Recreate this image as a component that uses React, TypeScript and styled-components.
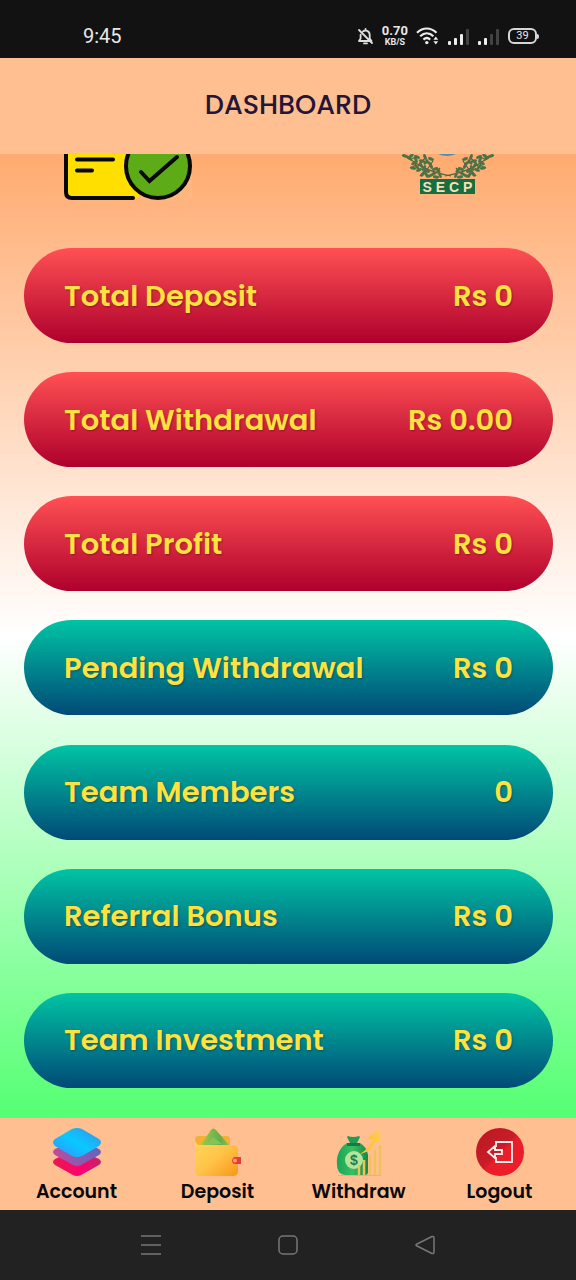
import React from 'react';
import styled, { createGlobalStyle } from 'styled-components';

const GlobalStyle = createGlobalStyle`
  * { box-sizing: border-box; }
  body {
    margin: 0;
    font-family: Poppins, Inter, "Open Sans", sans-serif;
    background: #222222;
  }
`;

const Screen = styled.div`
  display: flex;
  flex-direction: column;
  min-height: 100vh;
`;

const StatusBar = styled.div`
  display: flex;
  align-items: center;
  justify-content: space-between;
  height: 58px;
  padding: 14px 39px 0 83px;
  background: #121212;
  color: #e8e8e8;
`;

const Clock = styled.time`
  font-family: Roboto, sans-serif;
  font-size: 20px;
  line-height: 24px;
`;

const StatusIcons = styled.div`
  display: flex;
  align-items: center;
  gap: 8px;
`;

const Speed = styled.div`
  display: flex;
  flex-direction: column;
  align-items: center;
  font-family: Roboto, sans-serif;
  font-weight: 700;
`;

const SpeedValue = styled.span`
  font-size: 13px;
  line-height: 12px;
`;

const SpeedUnit = styled.span`
  font-size: 9px;
  line-height: 10px;
`;

const Battery = styled.div`
  display: grid;
  place-items: center;
  position: relative;
  width: 29px;
  height: 16px;
  border: 2px solid #d6d6d6;
  border-radius: 6px;
  font-family: Roboto, sans-serif;
  font-size: 11px;
  line-height: 12px;

  &::after {
    content: "";
    position: absolute;
    right: -4px;
    top: 4px;
    width: 2px;
    height: 5px;
    border-radius: 0 2px 2px 0;
    background: #d6d6d6;
  }
`;

const Header = styled.header`
  display: grid;
  place-items: center;
  height: 96px;
  padding-bottom: 2px;
  background: #ffbf91;
`;

const Title = styled.h1`
  margin: 0;
  font-size: 27px;
  line-height: 36px;
  font-weight: 500;
  color: #231638;
`;

const Main = styled.main`
  flex: 1;
  display: flex;
  flex-direction: column;
  background: linear-gradient(#ffab70, #ffffff 50%, #55ff73);
`;

const Badges = styled.div`
  display: flex;
  align-items: flex-end;
  justify-content: space-between;
  height: 46px;
  padding: 0 82px 0 64px;
`;

const Totals = styled.dl`
  flex: 1;
  display: flex;
  flex-direction: column;
  justify-content: space-between;
  gap: 29px;
  margin: 0;
  padding: 48px 23px 30px 24px;
`;

const Card = styled.div<{ $team?: boolean }>`
  display: flex;
  align-items: center;
  justify-content: space-between;
  height: 95px;
  padding: 0 40px;
  border-radius: 48px;
  background: ${(p) => (p.$team ? 'linear-gradient(#00c4a4, #004a77)' : 'linear-gradient(#ff5153, #ae002c)')};
  color: #ffe13f;
  font-size: 29px;
  line-height: 40px;
  font-weight: 600;
  text-shadow: 1px 1px 2px rgba(0, 0, 0, 0.3);
`;

const Label = styled.dt``;

const Amount = styled.dd`
  margin: 0;
`;

const TabBar = styled.nav`
  display: grid;
  grid-template-columns: repeat(4, 1fr);
  height: 92px;
  padding: 8px 6px 0;
  background: #ffbf91;
`;

const Tab = styled.a`
  display: flex;
  flex-direction: column;
  align-items: center;
  gap: 2px;
  color: #080808;
  font-size: 19px;
  line-height: 24px;
  font-weight: 600;
  text-decoration: none;
`;

const SystemBar = styled.div`
  display: flex;
  align-items: center;
  justify-content: center;
  gap: 109px;
  height: 70px;
  background: #222222;
`;

const SystemButton = styled.button`
  display: grid;
  width: 28px;
  height: 28px;
  padding: 0;
  place-items: center;
  border: 0;
  background: none;
  color: #777777;
`;

const BellOff = () => (
  <svg width="17" height="19" viewBox="0 0 17 19" fill="none" stroke="#dedede" strokeWidth="1.8" strokeLinecap="round" strokeLinejoin="round" aria-hidden="true">
    <path d="M6 4.400C8 2.700 12.700 3.500 12.700 8v3.500l1.800 2.500H2l1.600-2.500V7.600M8.600 3V2M7 16.400h3M2 3l13 13" />
  </svg>
);

const Wifi = () => (
  <svg width="24" height="18" viewBox="0 0 24 18" fill="none" stroke="#ececec" strokeWidth="2.2" aria-hidden="true">
    <path d="M1 5.7c6-5.6 13.600-5.600 19.500 0M4.200 9.200c4-3.800 9.200-3.800 13.200 0M7.400 12.600c2.200-2 4.700-2 6.800 0" />
    <circle cx="10.800" cy="15.600" r="1.700" fill="#ececec" stroke="none" />
    <path d="M17.400 12.700l2.400-3.200 2.400 3.200zM17.400 14.300l2.400 3.200 2.400-3.200z" fill="#ececec" stroke="none" />
  </svg>
);

const Signal = ({ level }: { level: number }) => (
  <svg width="22" height="17" viewBox="0 0 22 17" aria-hidden="true">
    {[4, 7, 11, 16].map((h, i) => (
      <rect key={h} x={i * 6} y={17 - h} width="3" height={h} rx="1" fill={i < level ? '#ededed' : '#434343'} />
    ))}
  </svg>
);

const VerifiedCard = () => (
  <svg width="128" height="46" viewBox="0 0 128 46" role="img" aria-label="Verified document">
    <path d="M2 -10V38q0 6 6 6H75V-10z" fill="#ffdf00" />
    <path d="M2 -10V38q0 6 6 6H69" fill="none" stroke="#080808" strokeWidth="4" strokeLinecap="round" />
    <path d="M13 5.500h36M13 16.500h15" stroke="#080808" strokeWidth="4" strokeLinecap="round" />
    <path d="M75 42q12 9 26 7h30V-10h-28z" fill="#ffb77f" />
    <circle cx="94" cy="12" r="32" fill="#5dab16" stroke="#080808" strokeWidth="4" />
    <path d="M77 18l8.500 9L113 3" fill="none" stroke="#080808" strokeWidth="4" strokeLinecap="round" />
  </svg>
);

const leaves = [
  [7, 4, 35], [12, 9, -35], [15, 3, 20], [19, 11, 60], [17, 16, -20], [24, 8, -50], [25, 17, 20],
  [29, 12, 65], [31, 20, -35], [36, 16, 50], [3, 2, 20], [11, 14, 15], [23, 3, 70], [34, 23, 10],
  [21, 20, -50], [29, 5, 20], [27, 22, -15], [38, 21, 70], [9, 2, -40], [14, 6, 70], [20, 7, 15],
  [22, 14, -60], [27, 9, 30], [33, 15, -20], [15, 13, 50], [24, 20, 60],
];

const Branch = () => (
  <g>
    <path d="M2 1C14 10 26 18 49 22M8 6l7-4M16 12l8-9M14 10l-5 5M24 17l7-10M23 16l-5 6M33 20l5-6" fill="none" stroke="#52683b" strokeWidth="1.200" />
    {leaves.map(([x, y, r]) => (
      <ellipse key={`${x}-${y}`} cx={x} cy={y} rx="3.200" ry="1.500" transform={`rotate(${r} ${x} ${y})`} fill="#4d7247" />
    ))}
  </g>
);

const SecpText = styled.text`
  font-family: "Liberation Sans", sans-serif;
  font-size: 14px;
  font-weight: 700;
`;

const Secp = () => (
  <svg width="92" height="46" viewBox="0 0 92 46" role="img" aria-label="SECP">
    <path d="M36 0h18q-9 4-18 0z" fill="#4e8eae" />
    <Branch />
    <g transform="translate(92 0) scale(-1 1)"><Branch /></g>
    <rect x="18" y="25" width="55" height="15" fill="#14713f" />
    <SecpText x="45.500" y="37.500" textAnchor="middle" fill="#ffddb8">S E C P</SecpText>
  </svg>
);

const AccountIcon = () => (
  <svg width="52" height="52" viewBox="0 0 52 52" aria-hidden="true">
    <defs>
      <linearGradient id="sheetBlue" x1="0" y1="1" x2="1" y2="0"><stop stopColor="#368fff" /><stop offset=".5" stopColor="#08c9ff" /><stop offset="1" stopColor="#3b8fea" /></linearGradient>
      <linearGradient id="sheetPurple"><stop stopColor="#c04b9a" /><stop offset="1" stopColor="#6465bd" /></linearGradient>
      <linearGradient id="sheetRed"><stop stopColor="#e81950" /><stop offset=".6" stopColor="#ff006f" /><stop offset="1" stopColor="#bd2769" /></linearGradient>
    </defs>
    <path d="M4 33q-4 3 0 6l18 10q4 2 8 0l18-10q4-3 0-6L26 23z" fill="url(#sheetRed)" />
    <path d="M4 23q-4 3 0 6l18 10q4 2 8 0l18-10q4-3 0-6L26 13z" fill="url(#sheetPurple)" />
    <path d="M21 3q5-2 10 0l17 10q4 3 0 7L31 30q-5 2-10 0L4 20q-4-4 0-7z" fill="url(#sheetBlue)" />
  </svg>
);

const DepositIcon = () => (
  <svg width="52" height="52" viewBox="0 0 52 52" aria-hidden="true">
    <defs>
      <linearGradient id="wallet" x2="1" y2="1"><stop stopColor="#ffd65b" /><stop offset=".5" stopColor="#ffc349" /><stop offset="1" stopColor="#f99716" /></linearGradient>
      <linearGradient id="note"><stop stopColor="#a4c948" /><stop offset=".7" stopColor="#5faf4c" /><stop offset="1" stopColor="#96bf42" /></linearGradient>
    </defs>
    <rect x="3" y="10" width="35" height="20" rx="4" fill="#f5b032" />
    <path d="M8 20L19 4q2-3 5 0l13 15-6 5H9z" fill="url(#note)" />
    <path d="M14 19l7-8 9 7z" fill="#86c257" />
    <path d="M3 14q1 5 5 5h34q4 0 4 4v22q0 5-5 5H8q-5 0-5-5z" fill="url(#wallet)" />
    <path d="M42 31h7v7h-7q-4-3 0-7z" fill="#e83c38" />
    <circle cx="43" cy="34.500" r="2" fill="#ff9b7a" />
  </svg>
);

const DollarText = styled.text`
  font-family: "Liberation Sans", sans-serif;
  font-size: 14px;
  font-weight: 700;
`;

const WithdrawIcon = () => (
  <svg width="52" height="52" viewBox="0 0 52 52" aria-hidden="true">
    <defs>
      <linearGradient id="bag"><stop stopColor="#16a65a" /><stop offset=".5" stopColor="#3cbd61" /><stop offset="1" stopColor="#108b49" /></linearGradient>
      <linearGradient id="gold"><stop stopColor="#ffb831" /><stop offset="1" stopColor="#ffcf4c" /></linearGradient>
    </defs>
    <path d="M14 17C7 21 3 30 4 38c0 7 3 11 9 11h19q3 0 3-3V29q-1-8-8-12z" fill="url(#bag)" />
    <path d="M15 10q5 2 11 0l1 1-3 6h-7l-3-6z" fill="#249b55" />
    <path d="M14 17h13v3H14z" fill="#117c45" />
    <circle cx="21" cy="34" r="9" fill="#b7e49b" />
    <DollarText x="21" y="39" textAnchor="middle" fill="#277b45">$</DollarText>
    <path d="M27 28Q36 22 40 14l-6-2 12-8 2 12-5-1Q39 26 27 28z" fill="url(#gold)" />
    <path d="M26 39v10M31 34v15M37 29v20M42 24v25M47 19v30" fill="none" stroke="#f3c15b" strokeWidth="2.500" />
    <path d="M5 49.500h43" stroke="#edb64e" />
  </svg>
);

const LogoutIcon = () => (
  <svg width="52" height="52" viewBox="0 0 52 52" aria-hidden="true">
    <defs><linearGradient id="exit" x2="1" y2="1"><stop stopColor="#b81824" /><stop offset=".48" stopColor="#c91d28" /><stop offset=".54" stopColor="#e91e29" /><stop offset="1" stopColor="#f01b27" /></linearGradient></defs>
    <circle cx="26" cy="26" r="24" fill="url(#exit)" />
    <path d="M22 21v-5h16v20H22v-5M28 24v4h-7v4l-7-6 7-6v4z" fill="none" stroke="#fff0f0" strokeWidth="1.800" />
  </svg>
);

const totals = [
  { label: 'Total Deposit', amount: 'Rs 0' },
  { label: 'Total Withdrawal', amount: 'Rs 0.00' },
  { label: 'Total Profit', amount: 'Rs 0' },
  { label: 'Pending Withdrawal', amount: 'Rs 0', team: true },
  { label: 'Team Members', amount: '0', team: true },
  { label: 'Referral Bonus', amount: 'Rs 0', team: true },
  { label: 'Team Investment', amount: 'Rs 0', team: true },
];

const tabs = [
  { label: 'Account', Icon: AccountIcon },
  { label: 'Deposit', Icon: DepositIcon },
  { label: 'Withdraw', Icon: WithdrawIcon },
  { label: 'Logout', Icon: LogoutIcon },
];

export default function App() {
  return (
    <Screen>
      <GlobalStyle />
      <StatusBar>
        <Clock>9:45</Clock>
        <StatusIcons>
          <BellOff />
          <Speed><SpeedValue>0.70</SpeedValue><SpeedUnit>KB/S</SpeedUnit></Speed>
          <Wifi />
          <Signal level={3} />
          <Signal level={2} />
          <Battery>39</Battery>
        </StatusIcons>
      </StatusBar>
      <Header><Title>DASHBOARD</Title></Header>
      <Main>
        <Badges><VerifiedCard /><Secp /></Badges>
        <Totals>
          {totals.map(({ label, amount, team }) => (
            <Card key={label} $team={team}>
              <Label>{label}</Label>
              <Amount>{amount}</Amount>
            </Card>
          ))}
        </Totals>
      </Main>
      <TabBar>
        {tabs.map(({ label, Icon }) => (
          <Tab key={label} href={`#${label.toLowerCase()}`}><Icon />{label}</Tab>
        ))}
      </TabBar>
      <SystemBar>
        <SystemButton aria-label="Recent apps">
          <svg width="20" height="20" viewBox="0 0 20 20" stroke="currentColor" strokeWidth="1.500"><path d="M0 1h20M0 10h20M0 19h20" /></svg>
        </SystemButton>
        <SystemButton aria-label="Home">
          <svg width="20" height="20" viewBox="0 0 20 20" fill="none" stroke="currentColor" strokeWidth="1.500"><rect x="1" y="1" width="18" height="18" rx="4" /></svg>
        </SystemButton>
        <SystemButton aria-label="Back">
          <svg width="20" height="20" viewBox="0 0 20 20" fill="none" stroke="currentColor" strokeWidth="1.500" strokeLinejoin="round"><path d="M17 1.500L2 9q-2 1 0 2l15 7.500q2 .5 2-1.500V3q0-2-2-1.500z" /></svg>
        </SystemButton>
      </SystemBar>
    </Screen>
  );
}
